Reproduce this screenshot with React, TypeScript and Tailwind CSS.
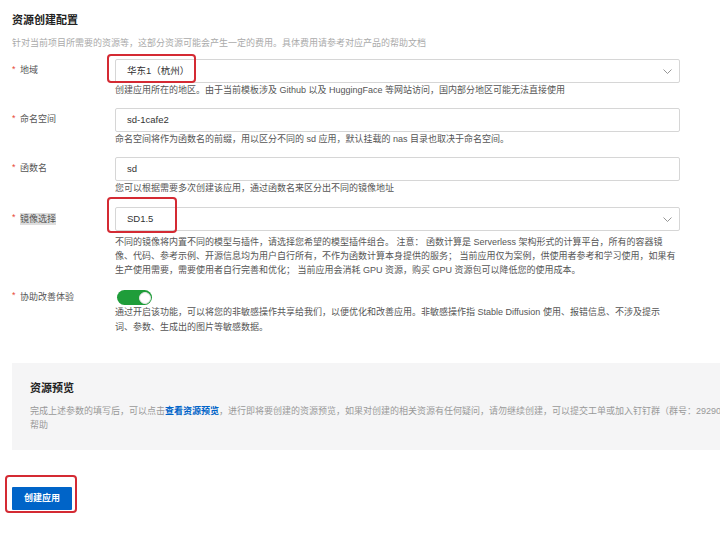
import type { ReactNode } from 'react';

const font = "font-['Liberation_Sans','Noto_Sans_CJK_SC',sans-serif]";

// Chevron for the select boxes
function Chevron() {
  return (
    <svg width="9" height="5" viewBox="0 0 9 5" fill="none" className="mr-[7px]">
      <path d="M0.5 0.5L4.5 4.5L8.5 0.5" stroke="#8a8a8a" strokeWidth="0.9" />
    </svg>
  );
}

interface RowProps {
  label: string;
  children: ReactNode;
  help?: ReactNode;
  helpClass?: string;
  className?: string;
  fieldHeight?: string;
  selected?: boolean;
}

function Row({ label, children, help, helpClass = '', className = '', fieldHeight = 'h-6', selected }: RowProps) {
  return (
    <div className={`flex ${className}`}>
      <div className={`w-[103px] ${fieldHeight} flex items-center text-[9px] text-[#555]`}>
        <span className="text-[#e8473b] w-2 -mt-[3px]">*</span>
        <span className={selected ? 'bg-[#dedede] leading-[12px]' : ''}>{label}</span>
      </div>
      <div className="w-[565px]">
        {children}
        {help && <div className={`text-[9px] leading-[14px] text-[#555] whitespace-nowrap ${helpClass}`}>{help}</div>}
      </div>
    </div>
  );
}

function TextBox({ value, select, highlight }: { value: string; select?: boolean; highlight?: string }) {
  return (
    <div className="relative h-6 border border-[#d6d6d6] rounded-[2px] bg-white flex items-center justify-between pl-[11px]">
      <span className="text-[9.5px] text-[#333]">{value}</span>
      {select && <Chevron />}
      {highlight && <div className={`absolute border-2 border-[#d42a33] rounded-[4px] ${highlight}`} />}
    </div>
  );
}

export default function App() {
  return (
    <div className={`w-[720px] h-[538px] overflow-hidden bg-white ${font}`}>
      <div className="pl-3 pt-3">
        <h2 className="text-[11px] leading-4 font-bold text-[#222]">资源创建配置</h2>
        <p className="mt-2 text-[9px] leading-[14px] text-[#aaa]">
          针对当前项目所需要的资源等，这部分资源可能会产生一定的费用。具体费用请参考对应产品的帮助文档
        </p>

        <Row
          label="地域"
          className="mt-[9px]"
          help="创建应用所在的地区。由于当前模板涉及 Github 以及 HuggingFace 等网站访问，国内部分地区可能无法直接使用"
        >
          <TextBox value="华东1（杭州）" select highlight="-left-[9px] -top-[6px] w-[89px] h-[29px]" />
        </Row>

        <Row
          label="命名空间"
          className="mt-[11px]"
          help="命名空间将作为函数名的前缀，用以区分不同的 sd 应用，默认挂载的 nas 目录也取决于命名空间。"
        >
          <TextBox value="sd-1cafe2" />
        </Row>

        <Row label="函数名" className="mt-[11px]" help="您可以根据需要多次创建该应用，通过函数名来区分出不同的镜像地址">
          <TextBox value="sd" />
        </Row>

        <Row
          label="镜像选择"
          selected
          className="mt-3"
          helpClass="mt-1"
          help={
            <>
              不同的镜像将内置不同的模型与插件，请选择您希望的模型插件组合。 注意： 函数计算是 Serverless 架构形式的计算平台，所有的容器镜
              <br />
              像、代码、参考示例、开源信息均为用户自行所有，不作为函数计算本身提供的服务； 当前应用仅为案例，供使用者参考和学习使用，如果有
              <br />
              生产使用需要，需要使用者自行完善和优化； 当前应用会消耗 GPU 资源，购买 GPU 资源包可以降低您的使用成本。
            </>
          }
        >
          <TextBox value="SD1.5" select highlight="-left-[9px] -top-[11px] w-[70px] h-[36px]" />
        </Row>

        <Row
          label="协助改善体验"
          className="mt-[13px]"
          fieldHeight="h-[15px]"
          helpClass="leading-[15px]"
          help={
            <>
              通过开启该功能，可以将您的非敏感操作共享给我们，以便优化和改善应用。非敏感操作指 Stable Diffusion 使用、报错信息、不涉及提示
              <br />
              词、参数、生成出的图片等敏感数据。
            </>
          }
        >
          <div className="ml-[2px] w-[35px] h-[15px] rounded-full bg-[#1f9d3a] flex items-center justify-end pr-[1.5px]">
            <div className="w-3 h-3 rounded-full bg-white border border-[#e5e5e5]" />
          </div>
        </Row>

        <div className="mt-[28px] w-[708px] overflow-hidden bg-[#f5f5f6] pl-[18px] pt-[17px] pb-[18px]">
          <h3 className="text-[11px] leading-4 font-bold text-[#222]">资源预览</h3>
          <p className="mt-2 text-[9px] leading-[14px] text-[#999] whitespace-nowrap">
            完成上述参数的填写后，可以点击<span className="text-[#0064c8] font-bold">查看资源预览</span>，进行即将要创建的资源预览，如果对创建的相关资源有任何疑问，请勿继续创建，可以提交工单或加入钉钉群（群号：29290
            <br />
            帮助
          </p>
        </div>

        <div className="mt-[34px] relative w-[60px] h-[23px]">
          <button className="w-[60px] h-[23px] bg-[#0064c8] text-white text-[9px] font-bold rounded-[1px]">
            创建应用
          </button>
          <div className="absolute -left-[7px] -top-[9px] w-[72px] h-[38px] border-2 border-[#d42a33] rounded-[4px]" />
        </div>
      </div>
    </div>
  );
}
